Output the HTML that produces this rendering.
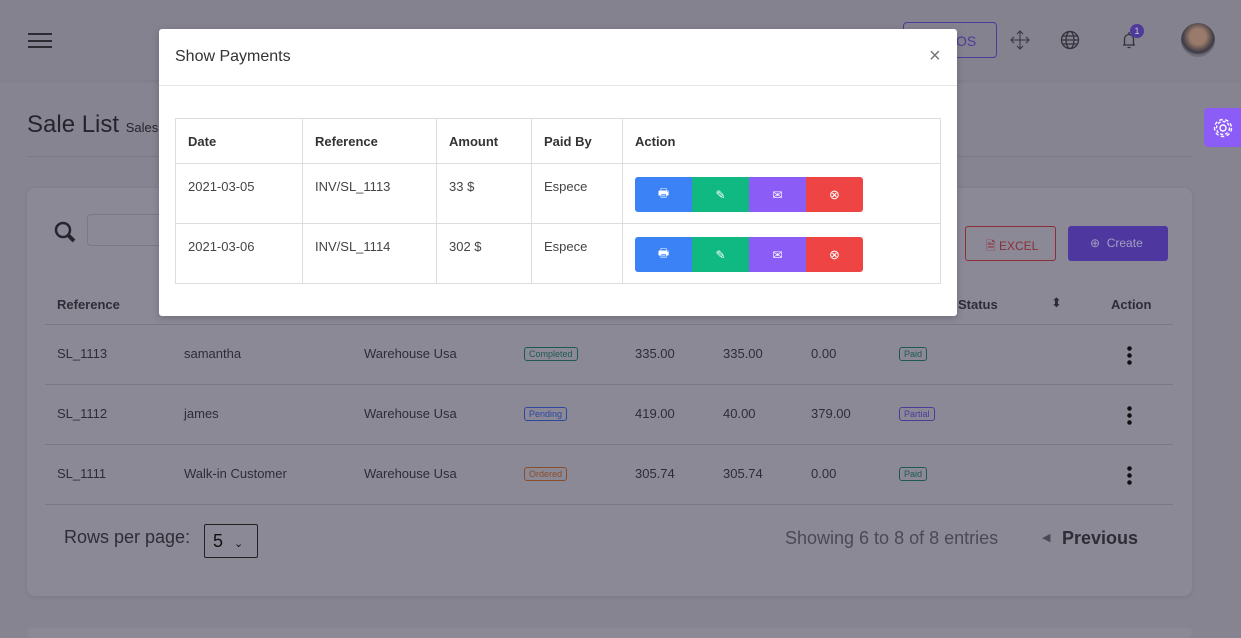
<!DOCTYPE html>
<html><head><meta charset="utf-8"><style>
*{box-sizing:border-box;margin:0;padding:0}
body{width:1241px;height:631px;overflow:hidden;background:#878492;font-family:"Liberation Sans",sans-serif;position:relative;color:#2b2a33}
.a{position:absolute}
.bgt{color:#2e2d36;font-size:13px}
.hdr{left:0;top:0;width:1241px;height:80px;background:#85828f;box-shadow:0 1px 3px rgba(0,0,0,.08)}
.card{left:27px;top:188px;width:1165px;height:408px;background:#8c8997;border-radius:8px;box-shadow:0 1px 4px rgba(0,0,0,.1)}
.line{height:1px;background:#7b7885}
.badge{font-size:9px;border:1px solid;border-radius:3px;padding:0 4px;line-height:12px}
.modal{left:159px;top:29px;width:798px;height:287px;background:#fff;border-radius:3px;box-shadow:0 2px 8px rgba(0,0,0,.2)}
table{border-collapse:collapse;position:absolute;left:16px;top:89px;font-size:13px;color:#222}
td{border:1px solid #ddd;padding:0 12px;vertical-align:top}
tr.h td{height:45px;padding-top:15px;font-weight:bold;color:#333}
tr.r td{height:60px;padding-top:15px;color:#444}
.btns{display:flex;margin-top:-2px}
.btns span{width:57px;height:35px;display:flex;align-items:center;justify-content:center;color:#fff}
</style></head><body>
<div class="a hdr"></div>
<div class="a" style="left:28px;top:33px;width:24px;height:2px;background:#2c2b33"></div>
<div class="a" style="left:28px;top:40px;width:24px;height:2px;background:#2c2b33"></div>
<div class="a" style="left:28px;top:46px;width:24px;height:2px;background:#2c2b33"></div>
<div class="a" style="left:903px;top:22px;width:94px;height:36px;border:1px solid #4d3a9a;border-radius:4px;color:#4d3a9a;font-size:14px;padding:10px 0 0 52px">OS</div>
<svg class="a" style="left:1009px;top:29px" width="22" height="22" viewBox="0 0 22 22" fill="none" stroke="#33323a" stroke-width="1"><path d="M11 2v18M2 11h18M8 5l3-3 3 3M8 17l3 3 3-3M5 8l-3 3 3 3M17 8l3 3-3 3"/></svg>
<svg class="a" style="left:1060px;top:30px" width="20" height="20" viewBox="0 0 20 20" fill="none" stroke="#33323a" stroke-width="1.3"><circle cx="10" cy="10" r="8.5"/><ellipse cx="10" cy="10" rx="4" ry="8.5"/><path d="M1.5 10h17M3 6h14M3 14h14"/></svg>
<svg class="a" style="left:1119px;top:30px" width="20" height="20" viewBox="0 0 20 20" fill="none" stroke="#33323a" stroke-width="1.3"><path d="M4 15h12M5.5 15V9a4.5 4.5 0 0 1 9 0v6M8.5 17.5h3M10 2v2"/></svg>
<div class="a" style="left:1130px;top:24px;width:14px;height:14px;border-radius:7px;background:#4d3a9a;color:#ccc;font-size:9px;text-align:center;line-height:14px">1</div>
<div class="a" style="left:1181px;top:23px;width:34px;height:34px;border-radius:17px;background:radial-gradient(circle at 50% 40%,#9a7a6a 0 30%,#3a3a45 60%,#6f6d78 70%)"></div>
<div class="a" style="left:1204px;top:108px;width:37px;height:39px;background:#8b5cf6;border-radius:4px 0 0 4px"></div>
<svg class="a" style="left:1212px;top:117px" width="22" height="22" viewBox="0 0 22 22" fill="none" stroke="#fff" stroke-width="1.4"><circle cx="11" cy="11" r="3"/><circle cx="11" cy="11" r="6.5" stroke-dasharray="3 2"/><circle cx="11" cy="11" r="8.5" stroke-dasharray="3.5 2.5"/></svg>
<div class="a" style="left:27px;top:111px;font-size:24px;color:#25242c">Sale List <span style="font-size:13px">Sales</span></div>
<div class="a line" style="left:27px;top:156px;width:1165px"></div>
<div class="a card"></div>
<svg class="a" style="left:53px;top:220px" width="24" height="24" viewBox="0 0 24 24" fill="none" stroke="#26252d" stroke-width="2.5"><circle cx="10" cy="10" r="7"/><path d="M15 15l6 6" stroke-width="4"/></svg>
<div class="a" style="left:87px;top:214px;width:90px;height:32px;border:1px solid #7b7885;border-radius:4px"></div>
<div class="a" style="left:965px;top:226px;width:91px;height:35px;border:1px solid #8a2e3a;border-radius:3px;color:#8a2e3a;font-size:12px;padding:10px 0 0 20px">🗎 EXCEL</div>
<div class="a" style="left:1068px;top:226px;width:100px;height:35px;background:#4e38a0;border-radius:3px;color:#a39fbf;font-size:12px;padding:10px 0 0 22px">⊕ &nbsp;Create</div>
<div class="a bgt" style="left:57px;top:297px;font-weight:bold">Reference</div>
<div class="a bgt" style="left:958px;top:297px;font-weight:bold">Status</div>
<div class="a bgt" style="left:1051px;top:295px">⬍</div>
<div class="a bgt" style="left:1111px;top:297px;font-weight:bold">Action</div>
<div class="a line" style="left:45px;top:324px;width:1128px"></div>
<div class="a line" style="left:45px;top:384px;width:1128px"></div>
<div class="a line" style="left:45px;top:444px;width:1128px"></div>
<div class="a line" style="left:45px;top:504px;width:1128px"></div>
<div class="a bgt" style="left:57px;top:346px">SL_1113</div><div class="a bgt" style="left:184px;top:346px">samantha</div><div class="a bgt" style="left:364px;top:346px">Warehouse Usa</div><div class="a badge" style="left:524px;top:347px;color:#1f5a4e">Completed</div><div class="a bgt" style="left:635px;top:346px">335.00</div><div class="a bgt" style="left:723px;top:346px">335.00</div><div class="a bgt" style="left:811px;top:346px">0.00</div><div class="a badge" style="left:899px;top:347px;color:#1f5a4e">Paid</div>
<div class="a bgt" style="left:57px;top:406px">SL_1112</div><div class="a bgt" style="left:184px;top:406px">james</div><div class="a bgt" style="left:364px;top:406px">Warehouse Usa</div><div class="a badge" style="left:524px;top:407px;color:#2d46a0">Pending</div><div class="a bgt" style="left:635px;top:406px">419.00</div><div class="a bgt" style="left:723px;top:406px">40.00</div><div class="a bgt" style="left:811px;top:406px">379.00</div><div class="a badge" style="left:899px;top:407px;color:#4d3a9a">Partial</div>
<div class="a bgt" style="left:57px;top:466px">SL_1111</div><div class="a bgt" style="left:184px;top:466px">Walk-in Customer</div><div class="a bgt" style="left:364px;top:466px">Warehouse Usa</div><div class="a badge" style="left:524px;top:467px;color:#8a4d2a">Ordered</div><div class="a bgt" style="left:635px;top:466px">305.74</div><div class="a bgt" style="left:723px;top:466px">305.74</div><div class="a bgt" style="left:811px;top:466px">0.00</div><div class="a badge" style="left:899px;top:467px;color:#1f5a4e">Paid</div>
<div class="a" style="left:1127px;top:345px;width:5px;height:20px;background:radial-gradient(circle,#111 2px,transparent 2.5px) 0 0/5px 7px"></div>
<div class="a" style="left:1127px;top:405px;width:5px;height:20px;background:radial-gradient(circle,#111 2px,transparent 2.5px) 0 0/5px 7px"></div>
<div class="a" style="left:1127px;top:465px;width:5px;height:20px;background:radial-gradient(circle,#111 2px,transparent 2.5px) 0 0/5px 7px"></div>
<div class="a" style="left:64px;top:527px;font-size:18px;color:#2e2d36">Rows per page:</div>
<div class="a" style="left:204px;top:524px;width:54px;height:34px;border:1px solid #222;border-radius:2px;font-size:18px;padding:6px 0 0 8px;color:#111">5 <span style="font-size:11px;margin-left:6px">⌄</span></div>
<div class="a" style="left:785px;top:528px;font-size:18px;color:#4a4955">Showing 6 to 8 of 8 entries</div>
<div class="a" style="left:1042px;top:531px;font-size:11px;color:#4a4955">◀</div>
<div class="a" style="left:1062px;top:528px;font-size:18px;font-weight:bold;color:#2e2d36">Previous</div>
<div class="a" style="left:27px;top:628px;width:1165px;height:10px;background:#8c8997;border-radius:6px"></div>
<div class="a modal">
<div class="a" style="left:16px;top:19px;font-size:16px;color:#333">Show Payments</div>
<div class="a" style="left:770px;top:16px;font-size:20px;color:#777">×</div>
<div class="a" style="left:0;top:56px;width:798px;height:1px;background:#e5e5e5"></div>
<table>
<tr class="h"><td style="width:127px">Date</td><td style="width:134px">Reference</td><td style="width:95px">Amount</td><td style="width:91px">Paid By</td><td style="width:318px">Action</td></tr>
<tr class="r"><td>2021-03-05</td><td>INV/SL_1113</td><td>33 $</td><td>Espece</td><td><div class="btns"><span style="background:#3b82f6;border-radius:3px 0 0 3px;font-size:12px">🖶</span><span style="background:#10b981;font-size:12px">✎</span><span style="background:#8b5cf6;font-size:12px">✉</span><span style="background:#ef4444;border-radius:0 3px 3px 0;font-size:13px">⊗</span></div></td></tr>
<tr class="r"><td>2021-03-06</td><td>INV/SL_1114</td><td>302 $</td><td>Espece</td><td><div class="btns"><span style="background:#3b82f6;border-radius:3px 0 0 3px;font-size:12px">🖶</span><span style="background:#10b981;font-size:12px">✎</span><span style="background:#8b5cf6;font-size:12px">✉</span><span style="background:#ef4444;border-radius:0 3px 3px 0;font-size:13px">⊗</span></div></td></tr>
</table>
</div>
</body></html>
